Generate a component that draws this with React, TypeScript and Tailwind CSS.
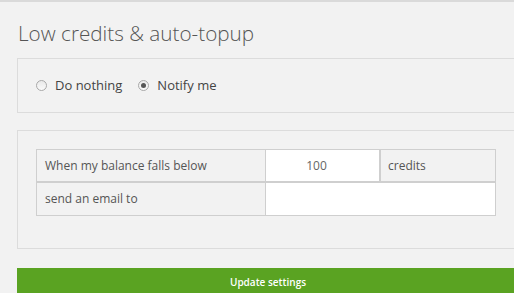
import React from "react";

function Radio({ checked }: { checked?: boolean }) {
  return (
    <span className="inline-flex h-[11px] w-[11px] items-center justify-center rounded-full border border-[#a9a9a9] bg-gradient-to-b from-[#e9e9e9] to-[#fafafa]">
      {checked && <span className="h-[5px] w-[5px] rounded-full bg-[#555]" />}
    </span>
  );
}

export default function App() {
  return (
    <div
      className="h-[293px] w-[514px] overflow-hidden border-t-2 border-[#dadada] bg-[#f2f2f2] text-[#555]"
      style={{ fontFamily: "'Open Sans', 'Noto Sans', sans-serif" }}
    >
      <div className="w-[502px] pl-[17px] box-content">
        <h1 className="pt-[16px] pl-[1px] text-[20.7px] font-light leading-[30px] text-[#555]">
          Low credits &amp; auto-topup
        </h1>
        <div className="mt-[10px] flex h-[55px] items-center gap-[16px] border border-[#dcdcdc] pl-[18px] text-[13px] text-[#444]">
          <label className="flex items-center gap-[8px]">
            <Radio />
            <span>Do nothing</span>
          </label>
          <label className="flex items-center gap-[8px]">
            <Radio checked />
            <span>Notify me</span>
          </label>
        </div>
        <div className="mt-[17px] h-[119px] border border-[#dcdcdc] pl-[18px] pt-[18px] text-[12px]">
          <div className="w-[460px]">
            <div className="flex h-[33px]">
              <div className="flex w-[230px] items-center border border-[#cfcfcf] pl-[8px]">
                When my balance falls below
              </div>
              <div className="flex w-[113px] items-center justify-center border-y border-[#cfcfcf] bg-white pr-[12px] text-[#666]">
                100
              </div>
              <div className="flex w-[117px] items-center border border-l-2 border-[#cfcfcf] pl-[7px]">
                credits
              </div>
            </div>
            <div className="flex h-[34px]">
              <div className="flex w-[230px] items-center border border-[#cfcfcf] pl-[8px]">
                send an email to
              </div>
              <div className="w-[230px] border-y border-r border-[#cfcfcf] bg-white" />
            </div>
          </div>
        </div>
        <button className="mt-[19px] flex h-[30px] w-full items-center justify-center bg-[#5aa322] pb-[2px] text-[10px] font-semibold text-white">
          Update settings
        </button>
      </div>
    </div>
  );
}
